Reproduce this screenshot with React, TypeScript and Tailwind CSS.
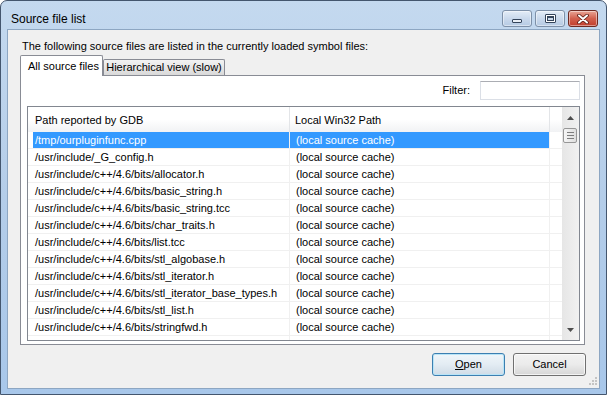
import type { ReactNode } from 'react';

const FILES = [
  '/tmp/ourpluginfunc.cpp',
  '/usr/include/_G_config.h',
  '/usr/include/c++/4.6/bits/allocator.h',
  '/usr/include/c++/4.6/bits/basic_string.h',
  '/usr/include/c++/4.6/bits/basic_string.tcc',
  '/usr/include/c++/4.6/bits/char_traits.h',
  '/usr/include/c++/4.6/bits/list.tcc',
  '/usr/include/c++/4.6/bits/stl_algobase.h',
  '/usr/include/c++/4.6/bits/stl_iterator.h',
  '/usr/include/c++/4.6/bits/stl_iterator_base_types.h',
  '/usr/include/c++/4.6/bits/stl_list.h',
  '/usr/include/c++/4.6/bits/stringfwd.h'
];

function CaptionButton({ children, close }: { children: ReactNode; close?: boolean }) {
  return (
    <div
      className={`flex h-[17px] w-[30px] items-center justify-center rounded-[3px] border shadow-[inset_0_0_0_1px_rgba(255,255,255,0.45)] ${
        close
          ? 'border-[#6e2a22] bg-gradient-to-b from-[#e8a596] via-[#d2604e] to-[#c13d2c]'
          : 'border-[#7d90a8] bg-gradient-to-b from-[#e4edf7] via-[#cad9ec] to-[#b5cae3]'
      }`}
    >
      {children}
    </div>
  );
}

function Arrow({ down }: { down?: boolean }) {
  return (
    <svg width="7" height="4" viewBox="0 0 7 4">
      <polygon points={down ? '0,0 7,0 3.5,4' : '0,4 7,4 3.5,0'} fill="#4d4d4d" />
    </svg>
  );
}

export default function App() {
  return (
    <div className="h-[395px] w-[607px] bg-white font-['Liberation_Sans','Arial',sans-serif] text-[11px] text-black">
      <div className="flex h-full flex-col rounded-t-[7px] border border-[#44566e] bg-gradient-to-b from-[#c4d9ef] via-[#b4cde9] to-[#a8c7ea] px-[7px] pb-[6px]">
        {/* title bar */}
        <div className="flex h-[29px] shrink-0 items-start">
          <span className="mt-[11px] pl-[3px] text-[12px] leading-[15px]">Source file list</span>
          <div className="ml-auto mr-[1px] mt-[9px] flex gap-[3px]">
            <CaptionButton>
              <div className="mt-[4px] h-[4px] w-[10px] rounded-[1px] border border-[#34445a] bg-[#e9eef5]" />
            </CaptionButton>
            <CaptionButton>
              <div className="flex h-[9px] w-[11px] rounded-[1px] border border-[#34445a] bg-white p-[1px]">
                <div className="flex-1 border border-t-2 border-[#34445a] bg-[#c9d8ea]" />
              </div>
            </CaptionButton>
            <CaptionButton close>
              <svg width="12" height="10" viewBox="0 0 12 10">
                <path d="M2 1.5 L10 8.5 M10 1.5 L2 8.5" stroke="#5a1a12" strokeWidth="3.6" strokeLinecap="round" />
                <path d="M2 1.5 L10 8.5 M10 1.5 L2 8.5" stroke="#ffffff" strokeWidth="2" strokeLinecap="round" />
              </svg>
            </CaptionButton>
          </div>
        </div>

        {/* client area */}
        <div className="relative flex flex-1 flex-col bg-[#f0f0f0] pt-[9px] shadow-[0_0_0_1px_#8da6c2]">
          <div className="h-[14px] pl-[14px] leading-[14px]">
            The following source files are listed in the currently loaded symbol files:
          </div>

          {/* tabs */}
          <div className="ml-[12px] mt-[2px] flex h-[20px] items-end">
            <div className="relative z-10 -mb-[1px] flex h-[21px] w-[83px] items-center rounded-t-[2px] border border-b-0 border-[#898c95] bg-white pl-[7px]">
              All source files
            </div>
            <div className="flex h-[16px] w-[122px] items-center justify-center whitespace-nowrap rounded-t-[2px] border border-b-0 border-[#898c95] bg-gradient-to-b from-[#f3f3f3] to-[#d9d9d9]">
              Hierarchical view (slow)
            </div>
          </div>

          {/* tab page */}
          <div className="ml-[12px] flex h-[270px] w-[565px] flex-col border border-[#898c95] bg-white">
            <div className="mt-[5px] flex h-[19px] items-center justify-end gap-[10px] pr-[4px]">
              <span>Filter:</span>
              <div className="h-[19px] w-[100px] border border-[#dbdfe6] border-t-[#abadb3] bg-white" />
            </div>

            {/* list view */}
            <div className="ml-[6px] mt-[6px] flex h-[235px] w-[553px] border border-[#828790] bg-white">
              <div className="flex w-[534px] flex-col overflow-hidden">
                <div className="flex h-[25px] shrink-0 bg-gradient-to-b from-white via-white to-[#f1f2f4]">
                  <div className="flex w-[262px] items-center border-r border-[#e3e5e8] pl-[7px] pt-[2px]">Path reported by GDB</div>
                  <div className="flex w-[260px] items-center border-r border-[#e3e5e8] pl-[5px] pt-[2px]">Local Win32 Path</div>
                  <div className="flex-1" />
                </div>
                {FILES.map((f, i) => {
                  const sel = i === 0;
                  return (
                    <div key={f} className="flex h-[17px] shrink-0 border-b border-[#f0f0f0]">
                      <div className="flex w-[262px] border-r border-[#f0f0f0] pl-[5px]">
                        <div className={`flex flex-1 items-center pl-[2px] ${sel ? 'bg-[#3399ff] text-white' : ''}`}>{f}</div>
                      </div>
                      <div className={`flex w-[260px] items-center border-r border-[#f0f0f0] pl-[6px] ${sel ? 'bg-[#3399ff] text-white' : ''}`}>
                        (local source cache)
                      </div>
                      <div className="flex-1" />
                    </div>
                  );
                })}
                <div className="flex flex-1">
                  <div className="w-[262px] border-r border-[#f0f0f0]" />
                  <div className="w-[260px] border-r border-[#f0f0f0]" />
                </div>
              </div>

              {/* scrollbar */}
              <div className="flex w-[17px] flex-col bg-gradient-to-r from-[#e6e6e6] to-[#f1f1f1]">
                <div className="flex h-[21px] items-center justify-center">
                  <Arrow />
                </div>
                <div className="ml-[1px] flex h-[15px] w-[14px] flex-col items-center justify-center gap-[2px] rounded-[2px] border border-[#979797] bg-gradient-to-r from-[#f6f6f6] to-[#dedede]">
                  <div className="h-px w-[7px] bg-[#7d7d7d]" />
                  <div className="h-px w-[7px] bg-[#7d7d7d]" />
                  <div className="h-px w-[7px] bg-[#7d7d7d]" />
                </div>
                <div className="flex-1" />
                <div className="flex h-[21px] items-center justify-center">
                  <Arrow down />
                </div>
              </div>
            </div>
          </div>

          {/* buttons */}
          <div className="mt-[8px] flex justify-end gap-[8px] pr-[13px]">
            <button className="flex h-[23px] w-[73px] items-center justify-center rounded-[3px] border border-[#3c7fb1] bg-gradient-to-b from-[#f0f6fa] via-[#e3ecf3] to-[#cfdbe6] shadow-[inset_0_0_0_1px_#b8e4f7]">
              <span>
                <span className="underline underline-offset-[1px]">O</span>pen
              </span>
            </button>
            <button className="flex h-[23px] w-[73px] items-center justify-center rounded-[3px] border border-[#707070] bg-gradient-to-b from-[#f2f2f2] via-[#ebebeb] to-[#d6d6d6] shadow-[inset_0_0_0_1px_rgba(255,255,255,0.7)]">
              Cancel
            </button>
          </div>

          {/* size grip */}
          <svg className="absolute bottom-[2px] right-[1px]" width="9" height="9" viewBox="0 0 9 9">
            <rect x="6" y="0" width="2" height="2" fill="#c4c4c4" />
            <rect x="3" y="3" width="2" height="2" fill="#c4c4c4" />
            <rect x="6" y="3" width="2" height="2" fill="#c4c4c4" />
            <rect x="0" y="6" width="2" height="2" fill="#c4c4c4" />
            <rect x="3" y="6" width="2" height="2" fill="#c4c4c4" />
            <rect x="6" y="6" width="2" height="2" fill="#c4c4c4" />
          </svg>
        </div>
      </div>
    </div>
  );
}
